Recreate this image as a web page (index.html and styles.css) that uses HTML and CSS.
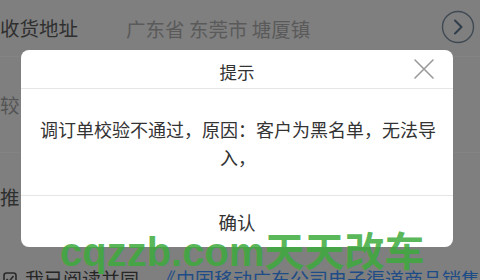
FILE: index.html
```html
<!DOCTYPE html>
<html lang="zh-CN">
<head>
<meta charset="utf-8">
<link rel="stylesheet" href="styles.css">
</head>
<body>
<div class="page">
  <div class="row row-addr">
    <span class="label">收货地址</span>
    <span class="addr">广东省 东莞市 塘厦镇</span>
    <span class="go">
      <svg width="34" height="34" viewBox="0 0 34 34"><circle cx="17" cy="17" r="15.5" fill="none" stroke="#3f4a54" stroke-width="1.4"/><path d="M14 10.5 L20.5 17 L14 23.5" fill="none" stroke="#2f3d4a" stroke-width="2" stroke-linecap="round" stroke-linejoin="round"/></svg>
    </span>
  </div>
  <div class="row row-b"><span class="label light">较</span></div>
  <div class="row row-c"><span class="label">推</span></div>
  <div class="row row-agree">
    <span class="check">
      <svg width="14" height="14" viewBox="0 0 14 14"><rect x="1" y="1" width="12" height="12" rx="2.5" fill="none" stroke="#2a2a2a" stroke-width="1.6"/><path d="M3.5 7 L6 9.5 L10.5 4" fill="none" stroke="#2a2a2a" stroke-width="1.6"/></svg>
    </span>
    <span class="agree">我已阅读并同意</span><span class="link">《中国移动广东公司电子渠道商品销售</span>
  </div>

  <div class="dialog">
    <div class="dlg-head">
      <span class="dlg-title">提示</span>
      <span class="dlg-close">
        <svg width="22" height="22" viewBox="0 0 22 22"><path d="M2 2 L20 20 M20 2 L2 20" stroke="#9a9a9a" stroke-width="1.6" stroke-linecap="round"/></svg>
      </span>
    </div>
    <div class="dlg-body">调订单校验不通过，原因：客户为黑名单，无法导入，</div>
    <div class="dlg-foot">确认</div>
  </div>

  <div class="watermark">cqzzb.com天天改车</div>
</div>
</body>
</html>
```

FILE: styles.css
```css
html, body {
  margin: 0;
  padding: 0;
}
body {
  width: 480px;
  height: 280px;
  overflow: hidden;
  background: #7f7f7f;
  font-family: "Noto Sans CJK SC", "Noto Sans", sans-serif;
}
.page {
  position: relative;
  width: 480px;
  height: 280px;
  overflow: hidden;
}
.row {
  display: flex;
  align-items: center;
  box-sizing: border-box;
}
.row-addr {
  height: 56px;
  padding-right: 5px;
}
.label {
  font-size: 19.5px;
  color: #2f2f2f;
  line-height: 28px;
}
.label.light {
  color: #545454;
}
.addr {
  margin-left: 48px;
  font-size: 19.5px;
  color: #5a5a5a;
  flex: 1;
}
.go {
  display: flex;
  width: 34px;
  height: 34px;
  margin-top: -3px;
}
.row-b {
  height: 96px;
  border-top: 1px solid #838383;
}
.row-c {
  height: 88px;
  border-top: 1px solid #838383;
}
.row-agree {
  height: 40px;
  padding-top: 25px;
  align-items: flex-start;
  font-size: 19px;
  line-height: 28px;
}
.check {
  display: flex;
  margin: 7px 0 0 3px;
  width: 14px;
  height: 14px;
}
.agree {
  margin-left: 8px;
  color: #262626;
}
.link {
  color: #1e4c86;
  white-space: nowrap;
}

.dialog {
  position: absolute;
  left: 21px;
  top: 50px;
  width: 432px;
  height: 197px;
  background: #ffffff;
  border-radius: 8px;
  display: flex;
  flex-direction: column;
  color: #333333;
}
.dlg-head {
  position: relative;
  height: 38px;
  border-bottom: 1px solid #e6e6e6;
  display: flex;
  align-items: center;
  justify-content: center;
}
.dlg-title {
  font-size: 17.5px;
  line-height: 24px;
  margin-top: 5px;
}
.dlg-close {
  position: absolute;
  right: 18px;
  top: 8px;
  width: 22px;
  height: 22px;
  display: flex;
}
.dlg-body {
  height: 107px;
  box-sizing: border-box;
  padding: 26px 14px 0 16px;
  font-size: 18px;
  line-height: 28px;
  text-align: center;
  border-bottom: 1px solid #e6e6e6;
}
.dlg-foot {
  flex: 1;
  display: flex;
  align-items: center;
  justify-content: center;
  font-size: 18.5px;
}

.watermark {
  position: absolute;
  left: 60px;
  top: 232px;
  font-family: "Liberation Sans", "Noto Sans CJK SC", sans-serif;
  font-weight: bold;
  font-size: 40px;
  line-height: 40px;
  color: rgba(60, 170, 60, 0.85);
  white-space: nowrap;
}
```
